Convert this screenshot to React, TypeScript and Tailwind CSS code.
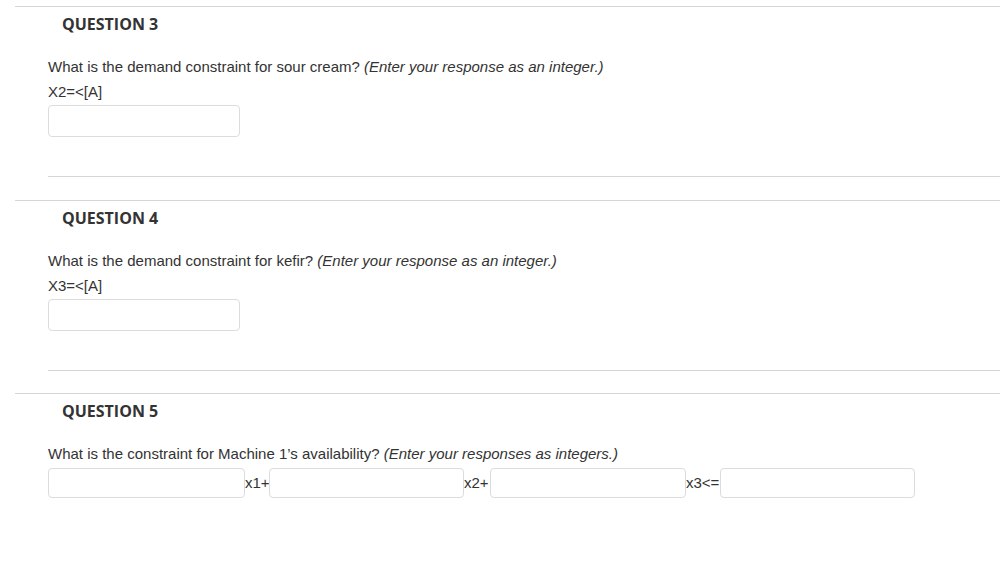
import React from 'react';

function Box({ w = 'w-[192px]', h = 'h-[32px]' }: { w?: string; h?: string }) {
  return <input type="text" className={`${w} ${h} border border-[#dcdcdc] rounded-[4px] bg-white outline-none shrink-0`} />;
}

function Heading({ n }: { n: number }) {
  return (
    <h2 className="pl-[47px] pt-[6px] text-[16px] leading-[22px] font-bold text-[#333] font-['Open_Sans',sans-serif]">
      QUESTION {n}
    </h2>
  );
}

function Prompt({ text, hint }: { text: string; hint: string }) {
  return (
    <p className="text-[15px] leading-[20px] text-[#333]">
      {text} <em>{hint}</em>
    </p>
  );
}

function SingleQuestion({ n, text, label, gap }: { n: number; text: string; label: string; gap: string }) {
  return (
    <section className="border-t border-[#d5d5d5]">
      <Heading n={n} />
      <div className="pl-[33px] pt-[22px] font-['Liberation_Sans',Arial,sans-serif]">
        <Prompt text={text} hint="(Enter your response as an integer.)" />
        <p className="text-[15px] leading-[20px] text-[#333] mt-[5px]">{label}</p>
        <div className="mt-[3px]">
          <Box />
        </div>
        <div className={`mt-[39px] border-t border-[#d5d5d5] ${gap}`} />
      </div>
    </section>
  );
}

export default function App() {
  return (
    <div className="w-[1000px] h-[564px] bg-white overflow-hidden pl-[15px] pt-[6px]">
      <SingleQuestion n={3} text="What is the demand constraint for sour cream?" label="X2=<[A]" gap="mb-[23px]" />
      <SingleQuestion n={4} text="What is the demand constraint for kefir?" label="X3=<[A]" gap="mb-[22px]" />
      <section className="border-t border-[#d5d5d5]">
        <Heading n={5} />
        <div className="pl-[33px] pt-[22px] font-['Liberation_Sans',Arial,sans-serif]">
          <Prompt text="What is the constraint for Machine 1’s availability?" hint="(Enter your responses as integers.)" />
          <div className="mt-[4px] flex items-center text-[15px] text-[#333]">
            <Box w="w-[197px]" h="h-[30px]" />
            <span className="w-[24px]">x1+</span>
            <Box w="w-[195px]" h="h-[30px]" />
            <span className="w-[26px]">x2+</span>
            <Box w="w-[196px]" h="h-[30px]" />
            <span className="w-[34px]">x3&lt;=</span>
            <Box w="w-[195px]" h="h-[30px]" />
          </div>
        </div>
      </section>
    </div>
  );
}
